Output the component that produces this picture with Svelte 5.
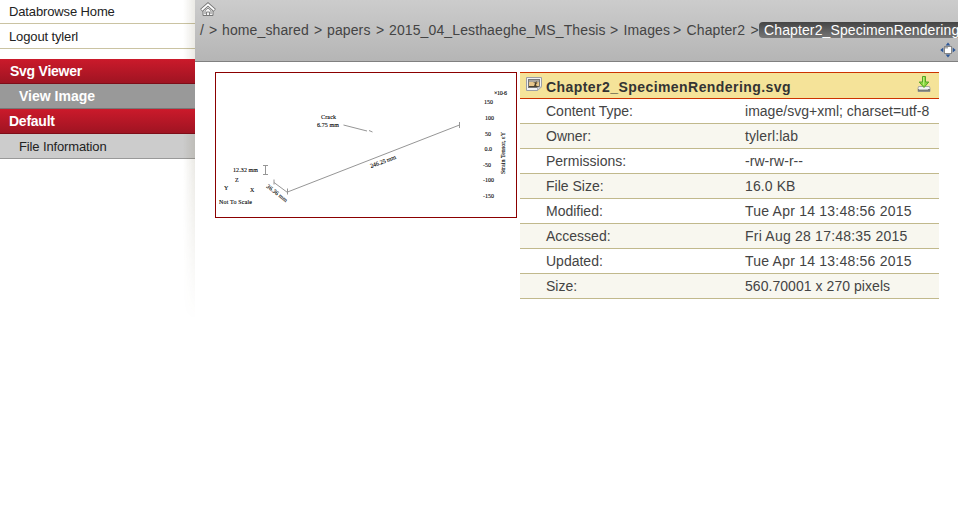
<script>
  const crumbs = [
    ['/', 9], ['>', 13], ['home_shared', 92], ['>', 13], ['papers', 49],
    ['>', 13], ['2015_04_Lesthaeghe_MS_Thesis', 221], ['>', 13.5],
    ['Images', 49.5], ['>', 13.5], ['Chapter2', 64], ['>', 8.5]
  ];
  const details = [
    ['Content Type:', 'image/svg+xml; charset=utf-8', 0.02],
    ['Owner:', 'tylerl:lab', 0.1],
    ['Permissions:', '-rw-rw-r--', 0.05],
    ['File Size:', '16.0 KB', 0.1],
    ['Modified:', 'Tue Apr 14 13:48:56 2015', 0.22],
    ['Accessed:', 'Fri Aug 28 17:48:35 2015', 0.22],
    ['Updated:', 'Tue Apr 14 13:48:56 2015', 0.22],
    ['Size:', '560.70001 x 270 pixels', 0.05]
  ];
  const scale = [
    ['150', 493, 104], ['100', 494, 120], ['50', 491, 136], ['0.0', 492, 151],
    ['-50', 491, 167], ['-100', 494, 182], ['-150', 494, 198]
  ];
</script>

<div class="page">
  <aside>
    <span class="link">Databrowse Home</span>
    <span class="link">Logout tylerl</span>
    <nav>
      <div class="group first">Svg Viewer</div>
      <div class="item active">View Image</div>
      <div class="group">Default</div>
      <div class="item">File Information</div>
    </nav>
    <div class="shade"></div>
  </aside>

  <main>
    <header>
      <svg class="home" width="16" height="16" viewBox="0 0 16 16">
        <path d="M3 8.500V14.500H13V8.500L8 4z" fill="#f4f4f4" stroke="#777" />
        <path d="M1.300 9.300 8 3.300l6.700 6" fill="none" stroke="#777" stroke-width="3.600" />
        <path d="M1.700 9 8 3.300 14.300 9" fill="none" stroke="#fff" stroke-width="1.700" />
        <path d="M5 13V9.500L8 7l3 2.500V13M6.500 14.500v-3.500h3v3.500" fill="none" stroke="#777" stroke-width=".9" />
      </svg>
      <div class="crumbs">
        {#each crumbs as [label, width]}
          <span style="width:{width}px">{label}</span>
        {/each}
        <span class="current">Chapter2_SpecimenRendering.svg</span>
      </div>
      <svg class="expand" width="16" height="16" viewBox="0 0 16 16">
        <path d="M8 .5l2.400 3H5.600zM8 15.500l2.400-3H5.600zM.3 8l3-2.400v4.800zM15.700 8l-3-2.400v4.800z" fill="#2d5796" />
        <rect x="4.500" y="4.500" width="7" height="7" fill="#fff" stroke="#888" />
        <path d="M5 5h3v1.500H5z" fill="#aaa" />
      </svg>
    </header>

    <section class="content">
      <div class="preview">
        <svg width="300" height="144" viewBox="216 73 300 144">
          <g fill="none" stroke="#969696" stroke-width="1">
            <path d="M287.5 192 459.5 125M287.5 188.5v6M459.5 122v6" />
            <path d="M274 182.5 287.5 192.5M274 179.5v5" />
            <path d="M263 165.5h5M263 174.5h5M265.5 165.5v9" />
            <path d="M343.5 125 367 131M369 130.5l3.5 1.5" />
          </g>
          <g class="notes">
            <text x="328.5" y="119" text-anchor="middle" textLength="15">Crack</text>
            <text x="328" y="126.5" text-anchor="middle" textLength="22">6.75 mm</text>
            <text x="233" y="172" textLength="25">12.32 mm</text>
            <text x="235" y="182">Z</text>
            <text x="224" y="190">Y</text>
            <text x="250" y="192">X</text>
            <text x="219" y="204" textLength="33">Not To Scale</text>
            <text transform="translate(371 168) rotate(-20)" textLength="27">246.25 mm</text>
            <text transform="translate(266 187) rotate(38)" textLength="25">36.36 mm</text>
            <text x="494" y="95" textLength="13">×10-6</text>
            {#each scale as [label, x, y]}
              <text {x} {y} text-anchor="end">{label}</text>
            {/each}
            <text transform="translate(505 174) rotate(-90)" textLength="42">Strain Tensor, εY</text>
          </g>
        </svg>
      </div>

      <div class="info">
        <div class="title">
          <svg class="picture" width="16" height="16" viewBox="0 0 16 16">
            <path d="M.5 1.5h15v9L11.5 14.5H.5z" fill="#f2f3f5" stroke="#9c9ea5" />
            <rect x="2.5" y="3.5" width="11" height="8" fill="#e9c78b" stroke="#777" />
            <path d="M3 4h10v2H3z" fill="#a9a59e" />
            <path d="M3 10h5l1-2.500-2-1.500 2 .5 2-1.500-.5 2 2-.5-2.500 1.500.5 2H13V11H3z" fill="#4a402f" />
            <path d="M11.5 14.5V11h4z" fill="#d6d7da" stroke="#9c9ea5" stroke-width=".7" />
          </svg>
          <strong>Chapter2_SpecimenRendering.svg</strong>
          <svg class="download" width="16" height="16" viewBox="0 0 16 16">
            <path d="M2.5 10.5h11l.5 2v3H2v-3z" fill="#f4f4f4" stroke="#999" stroke-width=".8" />
            <path d="M2 13h12v2.5H2z" fill="#777b78" />
            <path d="M3 13.5h9" stroke="#ddd" stroke-width=".7" />
            <path d="M6.5.5h3v5.500h3.300L8 11.500 3.200 6h3.300z" fill="#8bd63e" stroke="#55a526" />
            <path d="M7.700 1v8" stroke="#c6f58c" />
          </svg>
        </div>
        {#each details as [name, value, spacing]}
          <div class="row">
            <span class="name">{name}</span>
            <span style="letter-spacing:{spacing}px">{value}</span>
          </div>
        {/each}
      </div>
    </section>
  </main>
</div>

<style>
  .page {
    display: flex;
    width: 958px;
    height: 508px;
    overflow: hidden;
    background: #fff;
    color: #444;
    font: 14px/24px "Liberation Sans", Arial, sans-serif;
    box-sizing: border-box;
  }
  aside { position: relative; width: 195px; flex: none; font-size: 13px; color: #222; letter-spacing: -.13px; }
  .link { display: block; height: 23px; line-height: 23px; padding-left: 9px; border-bottom: 1px solid #cac3a2; }
  .link + .link { height: 24px; line-height: 25px; }
  nav { margin-top: 10px; }
  .group, .item { height: 24px; padding-left: 9px; border-bottom: 1px solid #7d0d18; line-height: 25px; }
  .group { background: linear-gradient(#cb1a2b, #9f1422); color: #fff; font-weight: bold; font-size: 14px; letter-spacing: -.25px; }
  .group.first { padding-left: 10px; }
  .item { padding-left: 19px; background: #ccc; border-color: #999; }
  .item.active { background: #999; color: #fff; font-weight: bold; font-size: 14px; border-color: #777; letter-spacing: 0; }
  .shade {
    position: absolute;
    top: 0;
    right: 0;
    width: 12px;
    height: 320px;
    background: linear-gradient(to right, transparent, rgba(90, 80, 40, .12));
    mask-image: linear-gradient(#000 50%, transparent);
  }
  .group, .item.active { position: relative; z-index: 1; }
  main { width: 763px; flex: none; }
  header {
    display: flex;
    flex-direction: column;
    height: 62px;
    box-sizing: border-box;
    overflow: hidden;
    border-bottom: 1px solid #808080;
    background: linear-gradient(#ccc, #b5b5b5);
  }
  .home { margin: 1px 0 0 4.5px; flex: none; }
  .crumbs { display: flex; height: 16px; flex: none; margin: 5px 0 0 5px; line-height: 16px; white-space: nowrap; }
  .crumbs span { flex: none; letter-spacing: .12px; }
  .crumbs .current { padding: 0 5px; border-radius: 4px; background: linear-gradient(#444, #777); color: #fff; }
  .expand { flex: none; align-self: flex-end; margin: 4px 2px 0 0; }
  .content { display: flex; align-items: flex-start; gap: 3px; padding: 10px 0 0 20px; }
  .preview { width: 300px; height: 144px; border: 1px solid #8b0000; flex: none; }
  .preview svg { display: block; }
  .notes { font: 6px "Liberation Serif", serif; fill: #000; stroke: #000; stroke-width: .1px; }
  .info { width: 419px; flex: none; }
  .title {
    display: flex;
    align-items: center;
    height: 25px;
    border-top: 1px solid #c30;
    border-bottom: 1px solid #c30;
    background: #f5e399;
    color: #333;
  }
  .title strong { flex: 1; padding-top: 2px; letter-spacing: .44px; }
  .picture { margin: -3px 4px 0 6px; }
  .download { margin: -4px 7px 0 0; }
  .row { display: flex; height: 24px; padding-left: 26px; border-bottom: 1px solid #c1b98c; line-height: 25px; }
  .row:nth-child(odd) { background: #f8f7ef; }
  .name { width: 199px; }
</style>
